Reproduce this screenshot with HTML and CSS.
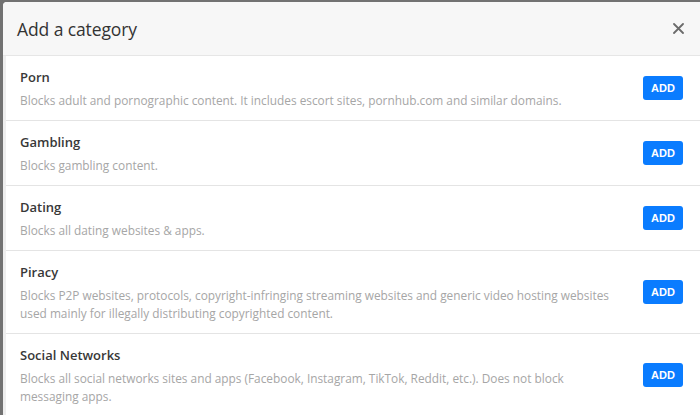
FILE: index.html
```html
<!DOCTYPE html>
<html>
<head>
<meta charset="utf-8">
<link rel="stylesheet" href="styles.css">
</head>
<body>
<div class="backdrop">
  <div class="modal">
    <div class="modal-header">
      <h2 class="modal-title">Add a category</h2>
      <button class="close" aria-label="Close">
        <svg width="11" height="11" viewBox="0 0 11 11"><path d="M1 1L10 10M10 1L1 10" stroke="#6b6b6b" stroke-width="1.8" stroke-linecap="round"/></svg>
      </button>
    </div>
    <div class="modal-body">
      <div class="item">
        <div class="info">
          <div class="name">Porn</div>
          <div class="desc">Blocks adult and pornographic content. It includes escort sites, pornhub.com and similar domains.</div>
        </div>
        <button class="add">ADD</button>
      </div>
      <div class="item">
        <div class="info">
          <div class="name">Gambling</div>
          <div class="desc">Blocks gambling content.</div>
        </div>
        <button class="add">ADD</button>
      </div>
      <div class="item">
        <div class="info">
          <div class="name">Dating</div>
          <div class="desc">Blocks all dating websites &amp; apps.</div>
        </div>
        <button class="add">ADD</button>
      </div>
      <div class="item">
        <div class="info">
          <div class="name">Piracy</div>
          <div class="desc">Blocks P2P websites, protocols, copyright-infringing streaming websites and generic video hosting websites used mainly for illegally distributing copyrighted content.</div>
        </div>
        <button class="add">ADD</button>
      </div>
      <div class="item">
        <div class="info">
          <div class="name">Social Networks</div>
          <div class="desc">Blocks all social networks sites and apps (Facebook, Instagram, TikTok, Reddit, etc.). Does not block messaging apps.</div>
        </div>
        <button class="add">ADD</button>
      </div>
    </div>
  </div>
</div>
</body>
</html>
```

FILE: styles.css
```css
html, body {
  margin: 0;
  padding: 0;
  height: 100%;
  overflow: hidden;
}
body {
  background: #727272;
  font-family: "Open Sans", "Noto Sans", sans-serif;
}
.backdrop {
  padding: 2px 0 0 3px;
}
.modal {
  background: #fff;
  border-radius: 4px 0 0 0;
  overflow: hidden;
}
.modal-header {
  height: 53px;
  background: #f7f7f7;
  border-bottom: 1px solid #e6e6e6;
  display: flex;
  align-items: center;
  justify-content: space-between;
  padding: 0 16px 0 14px;
}
.modal-title {
  margin: 0;
  font-size: 17.5px;
  font-weight: 400;
  color: #333;
  letter-spacing: -0.1px;
}
.close {
  background: none;
  border: 0;
  padding: 0;
  display: flex;
  cursor: pointer;
}
.modal-body {
  border-left: 3px solid #eeeeee;
}
.item {
  display: flex;
  align-items: center;
  padding: 11px 17px 11px 14px;
  border-bottom: 1px solid #e4e4e4;
  gap: 20px;
}
.info {
  flex: 1;
}
.name {
  font-size: 13px;
  line-height: 21px;
  color: #383838;
  font-weight: 600;
  margin-bottom: 3px;
}
.desc {
  font-size: 11.85px;
  line-height: 18px;
  color: #a6a6a6;
}
.add {
  width: 40px;
  height: 24px;
  background: #0a7cff;
  border: 0;
  border-radius: 3px;
  color: #fff;
  font-family: "Liberation Sans", Arial, sans-serif;
  font-weight: 700;
  font-size: 11px;
  padding: 0;
  flex: none;
}
```
